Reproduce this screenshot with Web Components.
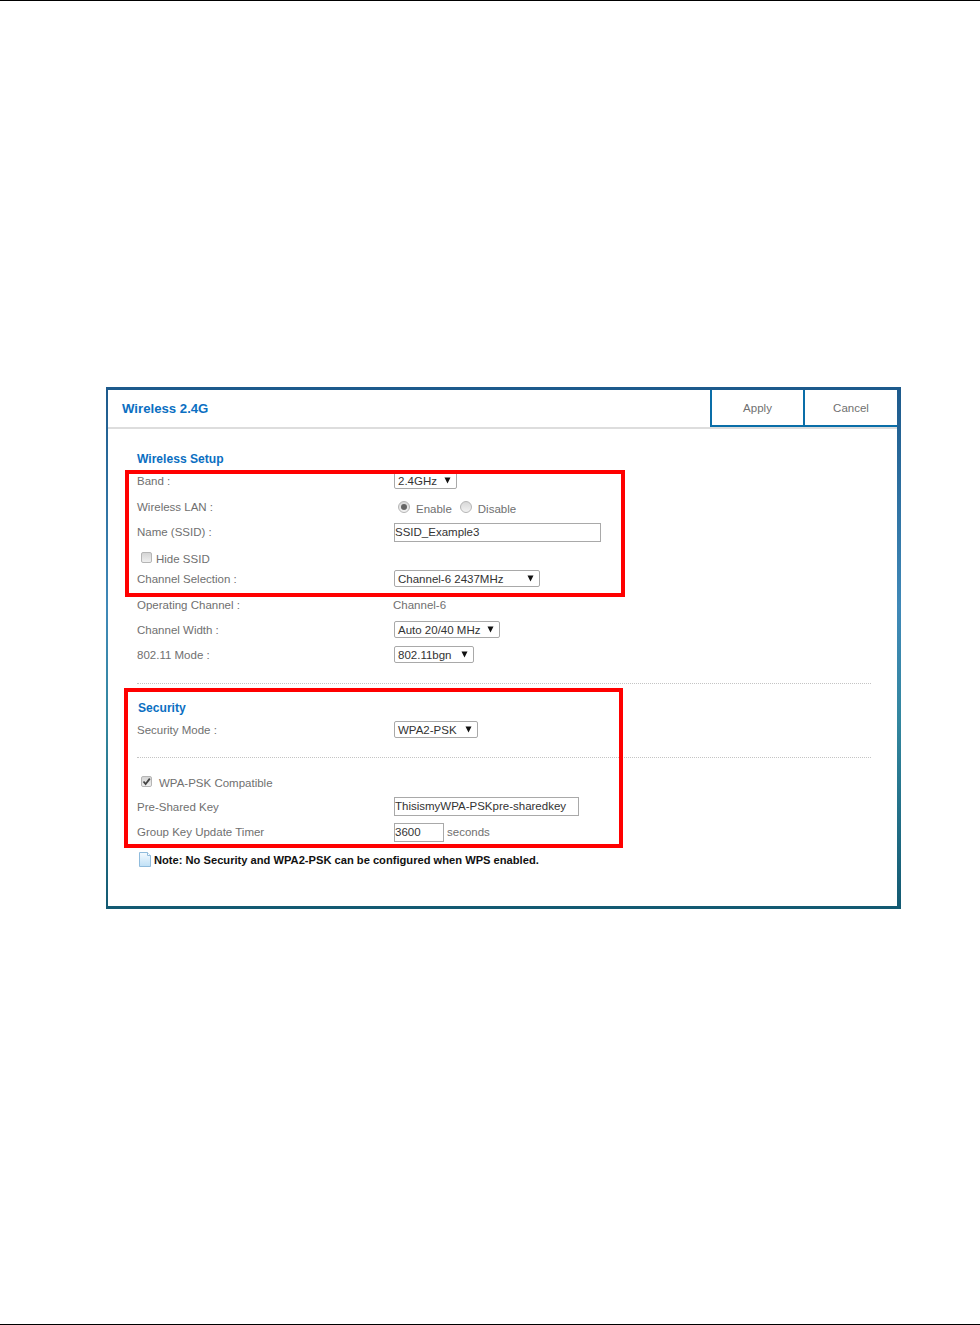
<!DOCTYPE html>
<html>
<head>
<meta charset="utf-8">
<title>Wireless 2.4G</title>
<style>
  html, body { margin: 0; background: #fff; }
  body { font-family: "Liberation Sans", Arial, sans-serif; }
</style>
</head>
<body>
<doc-page>
  <router-window heading="Wireless 2.4G">
    <section-title height="19">Wireless Setup</section-title>
    <red-box top="1" bottom="5" left="-12" width="500">
      <form-row label="Band :" raise><fake-select width="63">2.4GHz</fake-select></form-row>
      <form-row label="Wireless LAN :">
        <radio-opt checked>Enable</radio-opt><radio-opt>Disable</radio-opt>
      </form-row>
      <form-row label="Name (SSID) :"><text-box width="207" drop>SSID_Example3</text-box></form-row>
      <check-row height="23" pad="6">Hide SSID</check-row>
      <form-row label="Channel Selection :" raise><fake-select width="146">Channel-6 2437MHz</fake-select></form-row>
    </red-box>
    <form-row label="Operating Channel :"><plain-val left="-1">Channel-6</plain-val></form-row>
    <form-row label="Channel Width :"><fake-select width="106">Auto 20/40 MHz</fake-select></form-row>
    <form-row label="802.11 Mode :"><fake-select width="80">802.11bgn</fake-select></form-row>
    <dot-line gap="16"></dot-line>
    <red-box top="4" bottom="4" left="-13" width="499">
      <section-title height="33" pad="15" shift="1">Security</section-title>
      <form-row label="Security Mode :"><fake-select width="84">WPA2-PSK</fake-select></form-row>
      <dot-line gap="15"></dot-line>
      <check-row height="36" pad="14" checked>WPA-PSK Compatible</check-row>
      <form-row label="Pre-Shared Key"><text-box width="185">ThisismyWPA-PSKpre-sharedkey</text-box></form-row>
      <form-row label="Group Key Update Timer">
        <text-box width="50" drop>3600</text-box><plain-val left="3">seconds</plain-val>
      </form-row>
    </red-box>
    <note-line>Note: No Security and WPA2-PSK can be configured when WPS enabled.</note-line>
  </router-window>
</doc-page>

<script>
class DocPage extends HTMLElement {
  constructor() {
    super();
    this.attachShadow({ mode: "open" });
    this.shadowRoot.innerHTML = `
      <style>
        :host { display: flex; flex-direction: column; height: 1325px; }
        .rule { height: 1px; background: #000; flex: none; }
        .body { flex: 1; padding: 386px 0 0 106px; }
      </style>
      <div class="rule"></div>
      <div class="body"><slot></slot></div>
      <div class="rule"></div>`;
  }
}

class RouterWindow extends HTMLElement {
  constructor() {
    super();
    this.attachShadow({ mode: "open" });
    this.shadowRoot.innerHTML = `
      <style>
        :host {
          display: block;
          box-sizing: border-box;
          width: 795px;
          height: 522px;
          border-style: solid;
          border-width: 3px 4px 3px 2px;
          border-image: linear-gradient(180deg, #1d5a8c 0%, #4089b8 42%, #33879f 64%, #135a72 100%) 1;
          font: 11.5px "Liberation Sans", Arial, sans-serif;
          color: #707070;
        }
        header {
          display: flex;
          align-items: stretch;
          height: 37px;
          border-bottom: 2px solid #ddd;
        }
        h1 {
          flex: 1;
          margin: 0;
          padding-left: 14px;
          align-self: center;
          font-size: 13.2px;
          font-weight: bold;
          color: #0b6fc2;
        }
        .btn {
          box-sizing: border-box;
          width: 95px;
          display: flex;
          align-items: center;
          justify-content: center;
          border: solid #0a6ea8;
          border-width: 0 2px 2px 2px;
        }
        .btn + .btn { border-width: 0 0 2px 0; width: 92px; }
        .form { padding: 21px 0 0 29px; width: 734px; }
      </style>
      <header>
        <h1>${this.getAttribute("heading")}</h1>
        <div class="btn">Apply</div>
        <div class="btn">Cancel</div>
      </header>
      <div class="form"><slot></slot></div>`;
  }
}

class SectionTitle extends HTMLElement {
  constructor() {
    super();
    this.attachShadow({ mode: "open" });
    const pad = this.getAttribute("pad") || 0;
    const shift = this.getAttribute("shift") || 0;
    this.shadowRoot.innerHTML = `
      <style>
        :host {
          display: block;
          box-sizing: border-box;
          height: ${this.getAttribute("height")}px;
          line-height: 18px;
          padding: ${pad}px 0 0 ${shift}px;
          font-size: 12.1px;
          font-weight: bold;
          color: #0b6fc2;
        }
      </style>
      <slot></slot>`;
  }
}

// red annotation frame drawn over a group of rows
class RedBox extends HTMLElement {
  constructor() {
    super();
    this.attachShadow({ mode: "open" });
    const a = (n) => this.getAttribute(n);
    this.shadowRoot.innerHTML = `
      <style>
        :host { display: block; position: relative; }
        .frame {
          position: absolute;
          box-sizing: border-box;
          top: ${a("top")}px;
          bottom: ${-a("bottom")}px;
          left: ${a("left")}px;
          width: ${a("width")}px;
          border: 4px solid #f00;
          pointer-events: none;
        }
      </style>
      <slot></slot>
      <div class="frame"></div>`;
  }
}

class FormRow extends HTMLElement {
  constructor() {
    super();
    this.attachShadow({ mode: "open" });
    this.shadowRoot.innerHTML = `
      <style>
        :host {
          display: grid;
          box-sizing: border-box;
          grid-template-columns: 257px 1fr;
          align-items: center;
          height: 25px;
        }
        :host([raise]) { padding-bottom: 2px; }
        .val { display: flex; align-items: center; }
      </style>
      <div>${this.getAttribute("label")}</div>
      <div class="val"><slot></slot></div>`;
  }
}

class FakeSelect extends HTMLElement {
  constructor() {
    super();
    this.attachShadow({ mode: "open" });
    this.shadowRoot.innerHTML = `
      <style>
        :host {
          box-sizing: border-box;
          display: flex;
          align-items: center;
          justify-content: space-between;
          width: ${this.getAttribute("width")}px;
          height: 17px;
          padding: 0 5px 0 3px;
          border: 1px solid #a9a9a9;
          border-radius: 2px;
          background: #fff;
          color: #333;
        }
        svg { flex: none; }
      </style>
      <slot></slot>
      <svg width="7" height="7" viewBox="0 0 7 7"><path d="M.5 .5h6L3.5 6.5z" fill="#111"/></svg>`;
  }
}

class TextBox extends HTMLElement {
  constructor() {
    super();
    this.attachShadow({ mode: "open" });
    this.shadowRoot.innerHTML = `
      <style>
        :host {
          box-sizing: border-box;
          display: block;
          width: ${this.getAttribute("width")}px;
          height: 19px;
          margin-top: ${this.hasAttribute("drop") ? 2 : 0}px;
          line-height: 16px;
          padding: 0;
          border: 1px solid #a9a9a9;
          color: #333;
        }
      </style>
      <slot></slot>`;
  }
}

class PlainVal extends HTMLElement {
  constructor() {
    super();
    this.attachShadow({ mode: "open" });
    this.shadowRoot.innerHTML = `
      <style>:host { display: block; margin-left: ${this.getAttribute("left") || 0}px; }</style>
      <slot></slot>`;
  }
}

class RadioOpt extends HTMLElement {
  constructor() {
    super();
    this.attachShadow({ mode: "open" });
    const dot = this.hasAttribute("checked") ? `<i></i>` : "";
    this.shadowRoot.innerHTML = `
      <style>
        :host { display: flex; align-items: center; margin-right: 8px; }
        :host([checked]) { margin-left: 4px; }
        b {
          box-sizing: border-box;
          width: 12px;
          height: 12px;
          margin-right: 6px;
          border-radius: 50%;
          border: 1px solid #b5b5b5;
          background: linear-gradient(#d8d8d8, #f2f2f2);
          display: flex;
          align-items: center;
          justify-content: center;
        }
        i { width: 6px; height: 6px; border-radius: 50%; background: #666; }
        span { padding-top: 4px; }
      </style>
      <b>${dot}</b><span><slot></slot></span>`;
  }
}

class CheckRow extends HTMLElement {
  constructor() {
    super();
    this.attachShadow({ mode: "open" });
    const tick = this.hasAttribute("checked")
      ? `<svg width="9" height="9" viewBox="0 0 9 9"><path d="M1.5 4.5 3.6 7 7.8 1.6" fill="none" stroke="#444" stroke-width="1.8"/></svg>`
      : "";
    const gap = this.hasAttribute("checked") ? 7 : 4;
    this.shadowRoot.innerHTML = `
      <style>
        :host {
          display: flex;
          align-items: center;
          box-sizing: border-box;
          height: ${this.getAttribute("height")}px;
          padding: ${this.getAttribute("pad")}px 0 0 4px;
        }
        b {
          box-sizing: border-box;
          width: 11px;
          height: 11px;
          margin: -3px ${gap}px 0 0;
          border: 1px solid #b5b5b5;
          border-radius: 2px;
          background: linear-gradient(#d4d4d4, #efefef);
          display: flex;
          align-items: center;
          justify-content: center;
        }
      </style>
      <b>${tick}</b><span><slot></slot></span>`;
  }
}

class DotLine extends HTMLElement {
  constructor() {
    super();
    this.attachShadow({ mode: "open" });
    this.shadowRoot.innerHTML = `
      <style>
        :host { display: block; margin-top: ${this.getAttribute("gap")}px; border-top: 1px dotted #c4c4c4; }
      </style>`;
  }
}

class NoteLine extends HTMLElement {
  constructor() {
    super();
    this.attachShadow({ mode: "open" });
    this.shadowRoot.innerHTML = `
      <style>
        :host {
          display: flex;
          align-items: center;
          gap: 3px;
          margin: 8px 0 0 2px;
          font-size: 11.15px;
          font-weight: bold;
          color: #111;
        }
      </style>
      <svg width="12" height="15" viewBox="0 0 12 15">
        <defs><linearGradient id="p" x1="0" y1="0" x2="0" y2="1"><stop offset="0" stop-color="#f4faff"/><stop offset="1" stop-color="#bfe0f6"/></linearGradient></defs>
        <path d="M.5.5h8l3 3v11H.5z" fill="url(#p)" stroke="#8fbbdc"/>
        <path d="M8.5.5v3h3" fill="#fff" stroke="#8fbbdc"/>
      </svg>
      <span><slot></slot></span>`;
  }
}

customElements.define("doc-page", DocPage);
customElements.define("router-window", RouterWindow);
customElements.define("section-title", SectionTitle);
customElements.define("red-box", RedBox);
customElements.define("form-row", FormRow);
customElements.define("fake-select", FakeSelect);
customElements.define("text-box", TextBox);
customElements.define("plain-val", PlainVal);
customElements.define("radio-opt", RadioOpt);
customElements.define("check-row", CheckRow);
customElements.define("dot-line", DotLine);
customElements.define("note-line", NoteLine);
</script>
</body>
</html>
